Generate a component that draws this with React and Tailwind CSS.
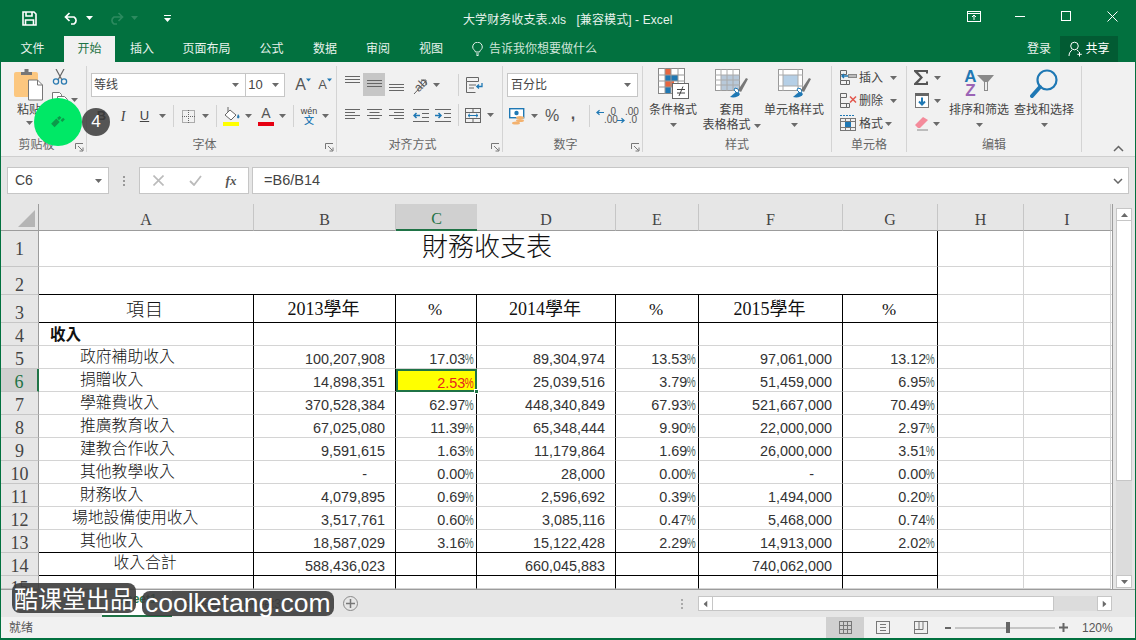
import { Fragment } from 'react';

const rows = [
  [5, '政府補助收入', '100,207,908', '17.03', '89,304,974', '13.53', '97,061,000', '13.12'],
  [6, '捐贈收入', '14,898,351', '2.53', '25,039,516', '3.79', '51,459,000', '6.95'],
  [7, '學雜費收入', '370,528,384', '62.97', '448,340,849', '67.93', '521,667,000', '70.49'],
  [8, '推廣教育收入', '67,025,080', '11.39', '65,348,444', '9.90', '22,000,000', '2.97'],
  [9, '建教合作收入', '9,591,615', '1.63', '11,179,864', '1.69', '26,000,000', '3.51'],
  [10, '其他教學收入', '-', '0.00', '28,000', '0.00', '-', '0.00'],
  [11, '財務收入', '4,079,895', '0.69', '2,596,692', '0.39', '1,494,000', '0.20'],
  [12, '場地設備使用收入', '3,517,761', '0.60', '3,085,116', '0.47', '5,468,000', '0.74'],
  [13, '其他收入', '18,587,029', '3.16', '15,122,428', '2.29', '14,913,000', '2.02'],
];

const CJK_TC = "font-['Noto_Sans_CJK_TC',sans-serif] font-light";
const SERIF = "font-['Liberation_Serif','Noto_Sans_CJK_TC',serif]";

const Caret = ({ className = '', color = '#6a6a6a' }) => (
  <svg width="7" height="4" viewBox="0 0 7 4" className={className}>
    <path d="M0 0h7L3.5 4z" fill={color} />
  </svg>
);

const Slot = ({ className = '', children }) => (
  <div className={`flex h-full shrink-0 items-center justify-center ${className}`}>{children}</div>
);

const Divider = () => <div className="h-[22px] w-px bg-[#d2d2d2]" />;

const Launcher = () => (
  <svg width="9" height="9" viewBox="0 0 9 9" fill="none" stroke="#777">
    <path d="M.5 6V.5H8" />
    <path d="M3 3l4.5 4.5M8 4.5V8H4.5" />
  </svg>
);

// one ribbon group, with its caption and the little launcher in the corner
const Group = ({ className = '', label, launcher, children }) => (
  <div className={`mt-1 flex h-[86px] shrink-0 flex-col border-r border-[#d4d4d4] ${className}`}>
    <div className="h-[71px]">{children}</div>
    <div className={`grid h-[15px] items-center text-[12px] leading-none text-[#666] ${launcher ? 'grid-cols-[1fr_14px]' : 'grid-cols-1'}`}>
      <span className="text-center">{label}</span>
      {launcher && (
        <span className="mt-[6px] flex justify-end pr-[2px]">
          <Launcher />
        </span>
      )}
    </div>
  </div>
);

const Lines = ({ widths, gap = 3, width = 16, align = 'left', className = '' }) => (
  <svg width={width} height={widths.length * (gap + 1)} className={className}>
    {widths.map((w, i) => (
      <rect
        key={i}
        x={align === 'left' ? 0 : align === 'right' ? width - w : (width - w) / 2}
        y={i * (gap + 1)}
        width={w}
        height="1"
        fill="#666"
      />
    ))}
  </svg>
);

const PasteIcon = () => (
  <svg width="30" height="32" viewBox="0 0 30 32">
    <rect x="0" y="3" width="24" height="25" rx="2" fill="#fcc77f" />
    <path d="M7 5V3h3.5V0h4v3H18v3H7z" fill="#777" />
    <path d="M14.5 11h9l5 5v15h-14z" fill="#fff" stroke="#777" />
    <path d="M23.5 11v5h5" fill="none" stroke="#777" />
  </svg>
);

const ScissorsIcon = () => (
  <svg width="16" height="16" viewBox="0 0 16 16" fill="none">
    <path d="M4 0l6 11M12 0L6 11" stroke="#666" strokeWidth="1.2" />
    <circle cx="4" cy="12.5" r="2.6" stroke="#2a7ab0" strokeWidth="1.3" />
    <circle cx="12" cy="12.5" r="2.6" stroke="#2a7ab0" strokeWidth="1.3" />
  </svg>
);

const CopyIcon = () => (
  <svg width="16" height="15" viewBox="0 0 16 15" fill="#fff" stroke="#777">
    <path d="M.5.5h7l2 2v8h-9z" />
    <path d="M5.5 4.5h7l3 3v7h-10z" />
    <path d="M7.5 8.5h6M7.5 10.5h6M7.5 12.5h6" />
  </svg>
);

const BorderIcon = () => (
  <svg width="13" height="13" viewBox="0 0 13 13" fill="none" stroke="#666" strokeDasharray="1 1">
    <rect x=".5" y=".5" width="12" height="12" />
    <path d="M6.5 0v13M0 6.5h13" />
  </svg>
);

const FillIcon = () => (
  <svg width="18" height="19" viewBox="0 0 18 19">
    <path d="M7 3l6 5-5 5-6-5z" fill="#fff" stroke="#666" />
    <path d="M5 0v5" stroke="#666" />
    <path d="M15 7c1.5 2 2 3 1 4s-2 0-2-1z" fill="#2a7ab0" />
    <rect x="0" y="15" width="16" height="4" fill="#ffff00" />
  </svg>
);

const OrientationIcon = () => (
  <div className="flex h-[22px] w-[22px] items-center justify-center">
    <span className="-rotate-45 text-[12px] leading-none text-[#555]">ab</span>
    <svg width="20" height="20" viewBox="0 0 20 20" className="-ml-[19px]" fill="none" stroke="#666">
      <path d="M6 19L18 6M13 5h5v5" />
    </svg>
  </div>
);

const WrapIcon = () => (
  <svg width="17" height="16" viewBox="0 0 17 16" fill="none" stroke="#666">
    <path d="M.5.5h12v4H.5zM.5 4.5v11h9M3 8h7M3 11h5" />
    <path d="M16 6v3.5h-5M13 7.5l-2.2 2 2.2 2" stroke="#1f78b4" strokeWidth="1.3" />
  </svg>
);

const MergeIcon = () => (
  <svg width="16" height="15" viewBox="0 0 16 15" fill="none" stroke="#666">
    <rect x=".5" y=".5" width="15" height="14" />
    <path d="M.5 4.5h15M.5 10.5h15M8 .5v4M8 10.5v4" />
    <path d="M3 7.5h10M5 5.8L3 7.5l2 1.7M11 5.8l2 1.7-2 1.7" stroke="#1f78b4" />
  </svg>
);

const IndentIcon = ({ dir }) => (
  <svg width="16" height="13" viewBox="0 0 16 13" fill="none" stroke="#666">
    <path d="M0 .5h16M9 4.5h7M9 8.5h7M0 12.5h16" />
    <path
      d={dir === 'dec' ? 'M7 6.5H1M3.5 4L1 6.5 3.5 9' : 'M0 6.5h6M3.5 4L6 6.5 3.5 9'}
      stroke="#1f78b4"
      strokeWidth="1.5"
    />
  </svg>
);

const CurrencyIcon = () => (
  <svg width="16" height="17" viewBox="0 0 16 17">
    <rect x=".7" y=".7" width="14" height="9" fill="#fff" stroke="#1f78b4" strokeWidth="1.4" />
    <circle cx="7.5" cy="5" r="2.2" fill="#1f78b4" />
    <ellipse cx="11" cy="9.5" rx="4" ry="1.6" fill="#f3b26f" />
    <ellipse cx="11" cy="12.5" rx="4" ry="1.6" fill="#f3b26f" />
    <ellipse cx="7" cy="15" rx="4" ry="1.6" fill="#f3b26f" />
  </svg>
);

const DecimalIcon = ({ more }) => (
  <div className="grid h-[16px] w-[20px] grid-cols-[8px_12px] grid-rows-2 items-center text-[10px] leading-[8px] text-[#555]">
    {more ? (
      <>
        <span />
        <span className="whitespace-nowrap text-right">.00</span>
        <svg width="8" height="7" viewBox="0 0 9 7" fill="none" stroke="#1f78b4" strokeWidth="1.4">
          <path d="M0 3.5h8M5 1l3 2.5L5 6" />
        </svg>
        <span className="text-right">.0</span>
      </>
    ) : (
      <>
        <svg width="8" height="7" viewBox="0 0 9 7" fill="none" stroke="#1f78b4" strokeWidth="1.4">
          <path d="M9 3.5H1M4 1L1 3.5 4 6" />
        </svg>
        <span className="text-right">.0</span>
        <span />
        <span className="whitespace-nowrap text-right">.00</span>
      </>
    )}
  </div>
);

const CondFormatIcon = () => (
  <svg width="31" height="31" viewBox="0 0 31 31">
    <rect x=".5" y=".5" width="26" height="25" fill="#fff" stroke="#888" />
    <rect x="7" y="1" width="6" height="6" fill="#e8663f" />
    <rect x="7" y="7" width="13" height="6" fill="#1f78b4" />
    <rect x="7" y="13" width="9" height="6" fill="#e8663f" />
    <rect x="7" y="19" width="6" height="6" fill="#1f78b4" />
    <path d="M7 0v26M13 0v26M20 0v26M0 7h27M0 13h27M0 19h27" stroke="#999" fill="none" />
    <rect x="14.5" y="15.5" width="16" height="15" fill="#fff" stroke="#666" />
    <path d="M19 21.5h8M19 25h8M25 18.5l-4 9.5" stroke="#444" fill="none" />
  </svg>
);

const Brush = () => (
  <>
    <path d="M15 28l7-6 3 3c-1 3-6 4-10 3z" fill="#1f78b4" />
    <path d="M20 19a4 4 0 014 4l-2 1-3-3z" fill="#fff" stroke="#1f78b4" />
    <path d="M23 21L31 9l2 1-7 13z" fill="#777" />
  </>
);

const TableStyleIcon = () => (
  <svg width="33" height="29" viewBox="0 0 33 29">
    <rect x=".5" y=".5" width="24" height="21" fill="#fff" stroke="#999" />
    <rect x="6" y="6" width="18" height="15" fill="#b8c9da" />
    <path d="M6 0v22M12 0v22M18 0v22M0 6h25M0 11h25M0 16h25" stroke="#aaa" fill="none" />
    <Brush />
  </svg>
);

const CellStyleIcon = () => (
  <svg width="33" height="29" viewBox="0 0 33 29">
    <rect x=".5" y=".5" width="24" height="21" fill="#fff" stroke="#999" />
    <rect x="5" y="6" width="15" height="11" fill="#b5cfe6" />
    <path d="M5 0v22M20 0v22M0 6h25M0 17h25" stroke="#aaa" fill="none" />
    <Brush />
  </svg>
);

const InsertCellsIcon = () => (
  <svg width="17" height="15" viewBox="0 0 17 15" fill="none" stroke="#666">
    <path d="M.5.5h6v4h-6zM.5 10.5h6v4h-6zM6.5 10.5h3v4h-3zM.5 4.5v6" />
    <rect x="8.5" y="4.5" width="8" height="3" fill="#bbb" stroke="#888" />
    <path d="M8 6H2M4 4L2 6l2 2" stroke="#1f78b4" strokeWidth="1.4" />
  </svg>
);

const DeleteCellsIcon = () => (
  <svg width="17" height="15" viewBox="0 0 17 15" fill="none" stroke="#666">
    <path d="M.5.5h6v4h-6zM.5 10.5h6v4h-6zM6.5 10.5h3v4h-3zM.5 4.5v6h7" />
    <path d="M10 3.5l6 6M16 3.5l-6 6" stroke="#e2574c" strokeWidth="1.5" />
  </svg>
);

const FormatCellsIcon = () => (
  <svg width="17" height="17" viewBox="0 0 17 17" fill="none" stroke="#777">
    <path d="M0 .5h2M3 .5h2M6 .5h2M9 .5h2M12 .5h2" stroke="#1f78b4" />
    <rect x=".5" y="3.5" width="15" height="12" />
    <path d="M.5 6.5h15M.5 12.5h15M5.5 3.5v12M10.5 3.5v12" />
    <rect x="5" y="7" width="6" height="5" fill="#1f78b4" stroke="none" />
  </svg>
);

const SigmaIcon = () => (
  <svg width="15" height="15" viewBox="0 0 15 15">
    <path d="M0 0h14v3.5h-2V2H4l5 5.5L4 13h8v-1.5h2V15H0v-1.5L6 7.5 0 1.5z" fill="#555" />
  </svg>
);

const FillDownIcon = () => (
  <svg width="14" height="15" viewBox="0 0 14 15">
    <rect x=".5" y=".5" width="13" height="14" fill="#fff" stroke="#777" />
    <rect x="0" y="0" width="14" height="3" fill="#666" />
    <path d="M7 4.5v7M4 8.5l3 3 3-3" fill="none" stroke="#1f78b4" strokeWidth="2" />
  </svg>
);

const EraserIcon = () => (
  <svg width="16" height="15" viewBox="0 0 16 15">
    <path d="M1 9l8-8 5 3-8 8H4z" fill="#f48b9b" />
    <path d="M3 14h11" stroke="#888" />
  </svg>
);

const SortIcon = () => (
  <div className="flex h-[29px] w-[30px] items-center">
    <div className="flex w-[13px] flex-col items-center text-[17px] font-bold leading-[14px]">
      <span className="text-[#1f78b4]">A</span>
      <span className="text-[#9b64b5]">Z</span>
    </div>
    <svg width="17" height="16" viewBox="0 0 17 16" className="-mt-[2px]">
      <path d="M0 0h17l-6 7v9H7V7z" fill="#8a8a8a" />
      <path d="M8 7v8h2V7" fill="#eee" />
    </svg>
  </div>
);

const FindIcon = () => (
  <svg width="28" height="29" viewBox="0 0 28 29" fill="none" stroke="#1f78b4">
    <circle cx="17" cy="11" r="9.5" strokeWidth="2.2" />
    <path d="M10 18L2 27" strokeWidth="4" strokeLinecap="round" />
  </svg>
);

const RibbonLabel = ({ children, className = '' }) => (
  <div className={`text-center text-[12px] leading-[15px] text-[#444] ${className}`}>{children}</div>
);

const BigButton = ({ className = '', icon, children }) => (
  <div className={`flex shrink-0 flex-col items-center ${className}`}>
    <div className="flex h-[33px] items-center justify-center">{icon}</div>
    {children}
  </div>
);

const TitleBar = () => (
  <div className="flex h-[36px] items-center text-white">
    <div className="flex h-full w-[462px] items-center">
      <Slot className="ml-[20px] w-[17px]">
        <svg width="15" height="15" viewBox="0 0 15 15" fill="none" stroke="#fff" strokeWidth="1.6">
          <path d="M1 1h11l2 2v11H1z" />
          <path d="M4 1v4h6V1M3.5 14V9h8v5" />
        </svg>
      </Slot>
      <Slot className="ml-[25px] w-[16px]">
        <svg width="15" height="13" viewBox="0 0 15 13" fill="none" stroke="#fff" strokeWidth="1.7">
          <path d="M2 5h8a4 4 0 010 7H7M5.5 1L1.5 5l4 4" />
        </svg>
      </Slot>
      <Slot className="ml-[5px] w-[10px]">
        <Caret color="#fff" />
      </Slot>
      <Slot className="ml-[14px] w-[16px]">
        <svg width="15" height="13" viewBox="0 0 15 13" fill="none" stroke="#2c8a5f" strokeWidth="1.7">
          <path d="M13 5H5a4 4 0 000 7h3M9.5 1l4 4-4 4" />
        </svg>
      </Slot>
      <Slot className="ml-[5px] w-[10px]">
        <Caret color="#2c8a5f" />
      </Slot>
      <Slot className="ml-[23px] w-[10px]">
        <svg width="7" height="7" viewBox="0 0 7 7" fill="#fff">
          <rect width="7" height="1" />
          <path d="M0 3h7L3.5 7z" />
        </svg>
      </Slot>
    </div>
    <div className="mt-[3px] whitespace-pre text-[12px] tracking-[0.1px] text-[#e8f3ed]">大学财务收支表.xls   [兼容模式] - Excel</div>
    <div className="ml-auto flex h-full items-center pb-[4px]">
      <Slot className="w-[46px]">
        <svg width="14" height="11" viewBox="0 0 14 11" fill="none" stroke="#fff">
          <rect x=".5" y=".5" width="13" height="10" />
          <path d="M.5 2.5h13M7 9V4.5M5 6l2-2 2 2" />
        </svg>
      </Slot>
      <Slot className="w-[46px]">
        <div className="h-px w-[10px] bg-white" />
      </Slot>
      <Slot className="w-[46px]">
        <div className="h-[10px] w-[10px] border border-white" />
      </Slot>
      <Slot className="w-[46px]">
        <svg width="11" height="11" viewBox="0 0 11 11" stroke="#fff">
          <path d="M.5.5l10 10M10.5.5l-10 10" />
        </svg>
      </Slot>
    </div>
  </div>
);

const Tab = ({ className = '', active, children }) => (
  <div
    className={`flex h-full shrink-0 items-center justify-center text-[12px] ${className} ${
      active ? 'bg-[#f1f1f1] text-[#1f7346]' : 'text-[#e8f3ed]'
    }`}
  >
    {children}
  </div>
);

const TabBar = () => (
  <div className="flex h-[26px] text-white">
    <Tab className="w-[63px]">文件</Tab>
    <Tab className="w-[51px]" active>开始</Tab>
    <Tab className="w-[54px]">插入</Tab>
    <Tab className="w-[75px]">页面布局</Tab>
    <Tab className="w-[55px]">公式</Tab>
    <Tab className="w-[52px]">数据</Tab>
    <Tab className="w-[54px]">审阅</Tab>
    <Tab className="w-[52px]">视图</Tab>
    <div className="ml-[15px] flex items-center gap-[6px] text-[12px] text-[#cfe5d9]">
      <svg width="11" height="14" viewBox="0 0 11 14" fill="none" stroke="#e8f3ed">
        <path d="M3.5 10C3 8 .7 7.5.7 5a4.8 4.8 0 019.6 0c0 2.5-2.3 3-2.8 5zM4 12h3M4.5 13.5h2" />
      </svg>
      告诉我你想要做什么
    </div>
    <div className="ml-auto flex h-full items-center">
      <span className="mr-[9px] text-[12px] text-[#e8f3ed]">登录</span>
      <div className="mr-[17px] flex h-full w-[58px] items-center justify-center gap-[2px] bg-[#025b33] text-[12px]">
        <svg width="15" height="16" viewBox="0 0 15 16" fill="none" stroke="#fff">
          <circle cx="6.5" cy="5" r="3.8" />
          <path d="M1 15c0-3 1.5-5 3-5.8M9 9.3c.7.3 1.3.7 1.7 1.2M11.5 11v4.5M9.3 13.3h4.5" />
        </svg>
        共享
      </div>
    </div>
  </div>
);

const FontGroup = () => (
  <Group className="w-[250px]" label="字体" launcher>
    <div className="ml-[4px] mt-[7px] flex h-[24px]">
      <div className="flex w-[157px] items-center justify-between border border-[#c6c6c6] bg-white pl-[2px] pr-[6px] text-[12px] text-[#444]">
        等线
        <Caret />
      </div>
      <div className="-ml-px flex w-[40px] items-center justify-between border border-[#c6c6c6] bg-white pl-[2px] pr-[5px] text-[13px] text-[#444]">
        10
        <Caret />
      </div>
      <Slot className="ml-[7px] w-[22px]">
        <span className="text-[16px] text-[#555]">A</span>
        <Caret className="-mt-[11px] w-[5px]" color="#1f78b4" />
      </Slot>
      <Slot className="w-[22px]">
        <span className="text-[13px] text-[#555]">A</span>
        <Caret className="-mt-[11px] w-[5px]" color="#1f78b4" />
      </Slot>
    </div>
    <div className="ml-[4px] mt-[8px] flex h-[22px] text-[#444]">
      <Slot className="w-[21px] text-[13px] font-bold">B</Slot>
      <Slot className="w-[22px] font-['Liberation_Serif',serif] text-[14px] italic">I</Slot>
      <Slot className="w-[21px] text-[13px] underline">U</Slot>
      <Slot className="w-[14px]"><Caret /></Slot>
      <Slot className="w-[8px]"><Divider /></Slot>
      <Slot className="w-[22px]"><BorderIcon /></Slot>
      <Slot className="w-[12px]"><Caret /></Slot>
      <Slot className="w-[10px]"><Divider /></Slot>
      <Slot className="w-[22px]"><FillIcon /></Slot>
      <Slot className="w-[10px]"><Caret /></Slot>
      <Slot className="ml-[2px] w-[22px]">
        <div className="flex w-[16px] flex-col items-center">
          <span className="text-[14px] leading-[13px] text-[#555]">A</span>
          <div className="mt-[2px] h-[4px] w-[16px] bg-[#e60012]" />
        </div>
      </Slot>
      <Slot className="w-[10px]"><Caret /></Slot>
      <Slot className="w-[12px]"><Divider /></Slot>
      <Slot className="w-[20px]">
        <div className="flex flex-col items-center leading-none">
          <span className="text-[9px] text-[#444]">wén</span>
          <span className="text-[10px] font-medium text-[#1f78b4]">文</span>
        </div>
      </Slot>
      <Slot className="w-[12px]"><Caret /></Slot>
    </div>
  </Group>
);

const AlignGroup = () => (
  <Group className="w-[166px]" label="对齐方式" launcher>
    <div className="ml-[4px] mt-[7px] flex h-[23px]">
      <Slot className="w-[22px] pb-[8px]"><Lines widths={[15, 15, 15]} gap={2} width={15} /></Slot>
      <Slot className="w-[22px] bg-[#c6c6c6]"><Lines widths={[15, 15, 15]} gap={2} width={15} /></Slot>
      <Slot className="w-[22px] pt-[8px]"><Lines widths={[15, 15, 15]} gap={2} width={15} /></Slot>
      <Slot className="ml-[3px] w-[22px]"><OrientationIcon /></Slot>
      <Slot className="w-[8px]"><Caret /></Slot>
      <Slot className="ml-[13px] w-[10px]"><Divider /></Slot>
      <Slot className="w-[22px]"><WrapIcon /></Slot>
    </div>
    <div className="ml-[4px] mt-[8px] flex h-[22px]">
      <Slot className="w-[22px]"><Lines widths={[15, 10, 15, 10]} gap={2} width={15} /></Slot>
      <Slot className="w-[22px]"><Lines widths={[15, 10, 15, 10]} gap={2} width={15} align="center" /></Slot>
      <Slot className="w-[22px]"><Lines widths={[15, 10, 15, 10]} gap={2} width={15} align="right" /></Slot>
      <Slot className="ml-[3px] w-[22px]"><IndentIcon dir="dec" /></Slot>
      <Slot className="w-[22px]"><IndentIcon dir="inc" /></Slot>
      <Slot className="w-[8px]"><Divider /></Slot>
      <Slot className="w-[22px]"><MergeIcon /></Slot>
      <Slot className="w-[12px]"><Caret /></Slot>
    </div>
  </Group>
);

const NumberGroup = () => (
  <Group className="w-[140px]" label="数字" launcher>
    <div className="ml-[4px] mt-[7px] flex h-[24px] w-[131px] items-center justify-between border border-[#c6c6c6] bg-white pl-[3px] pr-[6px] text-[12px] text-[#444]">
      百分比
      <Caret />
    </div>
    <div className="ml-[4px] mt-[8px] flex h-[22px]">
      <Slot className="w-[20px]"><CurrencyIcon /></Slot>
      <Slot className="w-[14px]"><Caret /></Slot>
      <Slot className="w-[22px] text-[16px] text-[#555]">%</Slot>
      <Slot className="w-[20px] pb-[5px] text-[16px] font-bold text-[#555]">,</Slot>
      <Slot className="w-[12px]"><Divider /></Slot>
      <Slot className="w-[22px]"><DecimalIcon /></Slot>
      <Slot className="w-[20px]"><DecimalIcon more /></Slot>
    </div>
  </Group>
);

const StylesGroup = () => (
  <Group className="w-[189px]" label="样式">
    <div className="flex pt-[1px]">
      <BigButton className="w-[60px]" icon={<CondFormatIcon />}>
        <RibbonLabel className="mt-[3px]">条件格式</RibbonLabel>
        <Caret className="mt-[5px]" />
      </BigButton>
      <BigButton className="w-[57px]" icon={<TableStyleIcon />}>
        <RibbonLabel className="mt-[3px]">套用</RibbonLabel>
        <RibbonLabel className="flex items-center gap-[3px] whitespace-nowrap">
          表格格式 <Caret />
        </RibbonLabel>
      </BigButton>
      <BigButton className="w-[68px]" icon={<CellStyleIcon />}>
        <RibbonLabel className="mt-[3px] whitespace-nowrap">单元格样式</RibbonLabel>
        <Caret className="mt-[5px]" />
      </BigButton>
    </div>
  </Group>
);

const CellRow = ({ icon, label, caretClass = 'ml-[7px]' }) => (
  <div className="flex h-[23px] items-center">
    <Slot className="w-[20px]">{icon}</Slot>
    <span className="ml-[1px] text-[12px] text-[#444]">{label}</span>
    <Caret className={caretClass} />
  </div>
);

const CellsGroup = () => (
  <Group className="w-[75px]" label="单元格">
    <div className="ml-[6px] flex flex-col">
      <CellRow icon={<InsertCellsIcon />} label="插入" />
      <CellRow icon={<DeleteCellsIcon />} label="删除" />
      <CellRow icon={<FormatCellsIcon />} label="格式" caretClass="ml-[2px]" />
    </div>
  </Group>
);

const EditGroup = () => (
  <Group className="w-[175px]" label="编辑">
    <div className="flex">
      <div className="ml-[6px] flex w-[32px] shrink-0 flex-col">
        <div className="flex h-[23px] items-center gap-[5px] pl-[1px]">
          <SigmaIcon />
          <Caret />
        </div>
        <div className="flex h-[23px] items-center gap-[5px] pl-[2px]">
          <FillDownIcon />
          <Caret />
        </div>
        <div className="flex h-[23px] items-center gap-[3px] pl-[1px]">
          <EraserIcon />
          <Caret />
        </div>
      </div>
      <BigButton className="ml-[1px] w-[66px] pt-[1px]" icon={<SortIcon />}>
        <RibbonLabel className="mt-[3px] whitespace-nowrap">排序和筛选</RibbonLabel>
        <Caret className="mt-[5px]" />
      </BigButton>
      <BigButton className="w-[64px] pt-[1px]" icon={<FindIcon />}>
        <RibbonLabel className="mt-[3px] whitespace-nowrap">查找和选择</RibbonLabel>
        <Caret className="mt-[5px]" />
      </BigButton>
    </div>
  </Group>
);

const Ribbon = () => (
  <div className="flex h-[95px] border-b border-[#cfcfcf] bg-[#f1f1f1]">
    <Group className="w-[86px]" label="剪贴板" launcher>
      <div className="flex pt-[3px]">
        <div className="ml-[13px] flex w-[30px] shrink-0 flex-col items-center">
          <PasteIcon />
          <RibbonLabel className="mt-[2px] whitespace-nowrap text-[12.5px]">粘贴</RibbonLabel>
          <Caret className="mt-[3px]" />
        </div>
        <div className="ml-[7px] flex flex-col">
          <div className="flex h-[16px] w-[18px] items-center justify-center"><ScissorsIcon /></div>
          <div className="mt-[7px] flex h-[15px] items-center">
            <div className="flex w-[18px] justify-center"><CopyIcon /></div>
            <Caret className="ml-[2px]" />
          </div>
        </div>
      </div>
    </Group>
    <FontGroup />
    <AlignGroup />
    <NumberGroup />
    <StylesGroup />
    <CellsGroup />
    <EditGroup />
    <div className="flex flex-1 items-end justify-end pb-[4px] pr-[11px]">
      <svg width="11" height="7" viewBox="0 0 11 7" fill="none" stroke="#666" strokeWidth="1.5">
        <path d="M1 6l4.5-4.5L10 6" />
      </svg>
    </div>
  </div>
);

const FormulaBar = () => (
  <div className="flex h-[47px] items-start bg-[#e6e6e6] pl-[6px] pr-[6px] pt-[10px]">
    <div className="flex h-[27px] w-[102px] items-center justify-between border border-[#c6c6c6] bg-white pl-[7px] pr-[6px] text-[14px] text-[#444]">
      C6
      <Caret />
    </div>
    <div className="flex h-[27px] w-[30px] flex-col items-center justify-center gap-[2px]">
      <div className="h-[2px] w-[2px] bg-[#999]" />
      <div className="h-[2px] w-[2px] bg-[#999]" />
      <div className="h-[2px] w-[2px] bg-[#999]" />
    </div>
    <div className="flex h-[27px] w-[110px] items-center border border-[#c6c6c6] bg-white text-[#bbb]">
      <Slot className="w-[37px]">
        <svg width="11" height="11" viewBox="0 0 11 11" stroke="#bbb" strokeWidth="1.6">
          <path d="M.5.5l10 10M10.5.5l-10 10" />
        </svg>
      </Slot>
      <Slot className="w-[36px]">
        <svg width="13" height="11" viewBox="0 0 13 11" fill="none" stroke="#bbb" strokeWidth="1.8">
          <path d="M1 6l4 4 7-9" />
        </svg>
      </Slot>
      <Slot className="w-[36px] font-['Liberation_Serif',serif] text-[13px] font-bold italic text-[#555]">fx</Slot>
    </div>
    <div className="ml-[3px] flex h-[27px] flex-1 items-center justify-between border border-[#c6c6c6] bg-white pl-[11px] pr-[5px] text-[14.5px] text-[#444]">
      =B6/B14
      <svg width="10" height="6" viewBox="0 0 10 6" fill="none" stroke="#666" strokeWidth="1.5">
        <path d="M1 1l4 4 4-4" />
      </svg>
    </div>
  </div>
);

const ColHead = ({ label, active }) => (
  <div
    className={`flex items-end justify-center border-b ${SERIF} text-[16px] leading-[20px] ${
      active
        ? 'border-b-2 border-b-[#1f7346] bg-[#d0d0d0] text-[#1f7346]'
        : 'border-r border-b-[#9c9c9c] border-r-[#c6c6c6] bg-[#e6e6e6] text-[#444]'
    }`}
  >
    {label}
  </div>
);

const RowHead = ({ n, active }) => (
  <div
    className={`flex justify-center overflow-hidden ${SERIF} text-[18px] leading-[18px] ${
      n === 1 ? 'items-center' : n === 15 ? 'items-start pt-[3px]' : 'items-end'
    } ${
      active
        ? 'border-r-2 border-b border-r-[#1f7346] border-b-[#c6c6c6] bg-[#d0d0d0] text-[#1f7346]'
        : 'border-r border-b border-r-[#9c9c9c] border-b-[#c6c6c6] bg-[#e6e6e6] text-[#444]'
    }`}
  >
    {n}
  </div>
);

const Blank = ({ black, bottom }) => (
  <div className={`border-r border-b ${black ? 'border-r-black' : 'border-r-[#d4d4d4]'} ${bottom ? 'border-b-black' : 'border-b-[#d4d4d4]'}`} />
);

const Num = ({ children, pad = 'pr-[10px]', bottom, className = '' }) => (
  <div
    className={`flex items-end justify-end border-r border-b border-r-black text-[14.4px] leading-[18px] text-[#333] ${pad} ${className} ${
      bottom ? 'border-b-black' : 'border-b-[#d4d4d4]'
    }`}
  >
    {children}
  </div>
);

// the percent sign is squeezed in the sheet's number format
const PctSign = ({ className = '' }) => (
  <span className={`-ml-[4px] inline-block origin-right scale-x-[0.7] ${className}`}>%</span>
);

const Pct = ({ value, bottom }) => (
  <Num pad="pr-[2px]" bottom={bottom}>
    {value}
    <PctSign className="text-[#4d6a66]" />
  </Num>
);

const HeadCell = ({ children }) => (
  <div className={`flex items-center justify-center border-r border-b border-r-black border-b-black pr-[2px] pt-[2px] ${SERIF} text-[18px] text-[#111]`}>
    {children}
  </div>
);

const SheetGrid = () => (
  <div className="grid h-[385px] flex-1 grid-cols-[38px_215px_142px_81px_139px_83px_144px_95px_86px_87px_1fr] grid-rows-[27px_36px_28px_28px_repeat(11,23px)_13px] overflow-hidden border-r border-[#9c9c9c] bg-white">
    <div className="flex items-end justify-end border-r border-b border-r-[#9c9c9c] border-b-[#9c9c9c] bg-[#e6e6e6] p-[3px]">
      <svg width="17" height="17" viewBox="0 0 17 17">
        <path d="M17 0v17H0z" fill="#b5b5b5" />
      </svg>
    </div>
    {['A', 'B', 'C', 'D', 'E', 'F', 'G', 'H', 'I'].map((c) => (
      <ColHead key={c} label={c} active={c === 'C'} />
    ))}
    <div className="border-b border-b-[#9c9c9c] bg-[#e6e6e6]" />

    <RowHead n={1} />
    <div className={`col-span-7 flex items-center justify-center border-r border-b border-r-black border-b-[#d4d4d4] pb-[8px] pr-[2px] ${CJK_TC} text-[26px] leading-none text-[#111]`}>
      財務收支表
    </div>
    <Blank /><Blank /><div className="border-b border-b-[#d4d4d4]" />

    <RowHead n={2} />
    <div className="col-span-7 border-r border-b border-r-black border-b-black" />
    <Blank /><Blank /><div className="border-b border-b-[#d4d4d4]" />

    <RowHead n={3} />
    <HeadCell><span className="-mt-[3px] font-['Noto_Sans_CJK_TC',sans-serif] font-light tracking-[1px]">項目</span></HeadCell>
    <HeadCell>2013學年</HeadCell>
    <HeadCell><span className="text-[17px]">%</span></HeadCell>
    <HeadCell>2014學年</HeadCell>
    <HeadCell><span className="text-[17px]">%</span></HeadCell>
    <HeadCell>2015學年</HeadCell>
    <HeadCell><span className="text-[17px]">%</span></HeadCell>
    <Blank /><Blank /><div className="border-b border-b-[#d4d4d4]" />

    <RowHead n={4} />
    <div className="flex items-center border-r border-b border-r-black border-b-[#d4d4d4] pl-[11px] font-['Noto_Sans_CJK_TC',sans-serif] text-[15.5px] font-bold leading-none text-[#111]">
      收入
    </div>
    <Blank black /><Blank black /><Blank black /><Blank black /><Blank black /><Blank black />
    <Blank /><Blank /><div className="border-b border-b-[#d4d4d4]" />

    {rows.map(([n, name, b, bp, d, dp, f, fp]) => {
      const last = n === 13;
      return (
        <Fragment key={n}>
          <RowHead n={n} active={n === 6} />
          <div
            className={`flex items-center border-r border-b border-r-black ${last ? 'border-b-black' : 'border-b-[#d4d4d4]'} ${
              n === 12 ? 'pl-[33px]' : 'pl-[41px]'
            } pb-[3px] ${CJK_TC} text-[15.8px] leading-none text-[#111]`}
          >
            {name}
          </div>
          <Num pad={b === '-' ? 'pr-[28px]' : 'pr-[10px]'} bottom={last}>{b}</Num>
          {n === 6 ? (
            <div className="relative flex items-end justify-end bg-[#ffff00] pr-[3px] text-[14.4px] leading-[18px] text-[#e8261c] shadow-[inset_0_0_0_2px_#1f7346]">
              {bp}
              <PctSign />
              <div className="absolute -bottom-[2px] -right-[2px] h-[5px] w-[5px] border border-white bg-[#1f7346]" />
            </div>
          ) : (
            <Pct value={bp} bottom={last} />
          )}
          <Num bottom={last}>{d}</Num>
          <Pct value={dp} bottom={last} />
          <Num pad={f === '-' ? 'pr-[28px]' : 'pr-[10px]'} bottom={last}>{f}</Num>
          <Pct value={fp} bottom={last} />
          <Blank /><Blank /><div className="border-b border-b-[#d4d4d4]" />
        </Fragment>
      );
    })}

    <RowHead n={14} />
    <div className={`flex items-center justify-center border-r border-b border-r-black border-b-black pb-[4px] pr-[2px] ${CJK_TC} text-[15.8px] leading-none text-[#111]`}>
      收入合計
    </div>
    <Num bottom>588,436,023</Num>
    <Blank black bottom />
    <Num bottom>660,045,883</Num>
    <Blank black bottom />
    <Num bottom>740,062,000</Num>
    <Blank black bottom />
    <Blank /><Blank /><div className="border-b border-b-[#d4d4d4]" />

    <RowHead n={15} />
    <Blank black /><Blank black /><Blank black /><Blank black /><Blank black /><Blank black /><Blank black />
    <Blank /><Blank /><div />
  </div>
);

const VScroll = () => (
  <div className="flex h-[385px] w-[22px] shrink-0 flex-col bg-[#e6e6e6] pl-[3px] pt-[4px]">
    <div className="flex h-[13px] w-[16px] items-center justify-center border border-[#c6c6c6] bg-white">
      <Caret className="rotate-180" />
    </div>
    <div className="h-[260px] w-[16px] border-x border-b border-[#c6c6c6] bg-white" />
    <div className="w-[16px] flex-1 bg-[#dcdcdc]" />
    <div className="mb-[1px] flex h-[13px] w-[16px] items-center justify-center border border-[#c6c6c6] bg-white">
      <Caret />
    </div>
  </div>
);

const SheetTabs = () => (
  <div className="flex h-[28px] items-center border-t border-[#9c9c9c] bg-[#e6e6e6]">
    <div className="ml-[101px] flex h-full w-[70px] items-start justify-center border-b-2 border-[#1f7346] bg-white pb-[3px] text-[12px] font-bold text-[#1f7346]">
      Sheet1
    </div>
    <div className="flex h-full w-[60px] items-center justify-center text-[12px] text-[#444]">Sheet2</div>
    <div className="flex h-full w-[60px] items-center justify-center text-[12px] text-[#444]">Sheet3</div>
    <div className="ml-[51px] flex h-[15px] w-[15px] items-center justify-center rounded-full border border-[#8a8a8a] text-[#777]">
      <svg width="9" height="9" viewBox="0 0 9 9" stroke="#777" strokeWidth="1.5">
        <path d="M4.5 0v9M0 4.5h9" />
      </svg>
    </div>
    <div className="ml-[323px] flex flex-col gap-[2px]">
      <div className="h-[2px] w-[2px] bg-[#aaa]" />
      <div className="h-[2px] w-[2px] bg-[#aaa]" />
      <div className="h-[2px] w-[2px] bg-[#aaa]" />
    </div>
    <div className="ml-[15px] flex h-[15px] w-[414px] bg-[#dcdcdc]">
      <div className="flex w-[15px] items-center justify-center border border-[#c6c6c6] bg-white">
        <Caret className="rotate-90" />
      </div>
      <div className="w-[341px] border-y border-r border-[#c6c6c6] bg-white" />
      <div className="ml-auto flex w-[15px] items-center justify-center border border-[#c6c6c6] bg-white">
        <Caret className="-rotate-90" />
      </div>
    </div>
  </div>
);

const StatusBar = () => (
  <div className="flex h-[21px] items-center bg-[#f1f1f1] text-[#555]">
    <span className="ml-[8px] text-[12px]">就绪</span>
    <div className="ml-[793px] flex h-full">
      <Slot className="w-[38px] bg-[#d0d0d0]">
        <svg width="13" height="13" viewBox="0 0 13 13" fill="none" stroke="#777">
          <rect x=".5" y=".5" width="12" height="12" />
          <path d="M.5 4.5h12M.5 8.5h12M4.5.5v12M8.5.5v12" />
        </svg>
      </Slot>
      <Slot className="w-[38px]">
        <svg width="14" height="13" viewBox="0 0 14 13" fill="none" stroke="#777">
          <rect x=".5" y=".5" width="13" height="12" />
          <path d="M4 3.5h6M4 6.5h6M4 9.5h6" />
        </svg>
      </Slot>
      <Slot className="w-[38px]">
        <svg width="14" height="13" viewBox="0 0 14 13" fill="none" stroke="#777">
          <rect x=".5" y=".5" width="13" height="12" />
          <path d="M.5 8.5H9M5 .5v8M9 .5v8" />
        </svg>
      </Slot>
    </div>
    <div className="ml-[5px] h-[2px] w-[6px] bg-[#666]" />
    <div className="relative ml-[4px] flex h-[2px] w-[100px] items-center bg-[#c6c6c6]">
      <div className="absolute left-[51px] h-[11px] w-[4px] bg-[#666]" />
    </div>
    <svg width="9" height="9" viewBox="0 0 9 9" stroke="#666" strokeWidth="2" className="ml-[4px]">
      <path d="M4.5 0v9M0 4.5h9" />
    </svg>
    <span className="ml-[14px] text-[12px]">120%</span>
  </div>
);

export default function App() {
  return (
    <div className="relative h-[640px] w-[1136px] overflow-hidden border-x border-b-2 border-[#02713f] bg-white font-['Liberation_Sans','Noto_Sans_CJK_SC',sans-serif]">
      <div className="bg-[#02713f]">
        <TitleBar />
        <TabBar />
      </div>
      <Ribbon />
      <FormulaBar />
      <div className="flex">
        <SheetGrid />
        <VScroll />
      </div>
      <SheetTabs />
      <StatusBar />

      {/* click highlight + step badge over the ribbon */}
      <div className="absolute left-[33px] top-[98px] flex h-[48px] w-[48px] items-center justify-center rounded-full bg-[#00e866]">
        <svg width="14" height="12" viewBox="0 0 16 14" fill="#0c9a4a">
          <path d="M0 9l6-6 4 4-6 6zM7 2l3-2 2 2-3 3zM11 5l3-3 2 2-3 3z" />
        </svg>
      </div>
      <div className="absolute left-[81px] top-[108px] flex h-[28px] w-[28px] items-center justify-center rounded-full bg-[#3a3a3a]/85 text-[17px] text-white">
        4
      </div>

      {/* course watermark */}
      <div className="absolute left-[11px] top-[583px] flex items-end font-['Noto_Sans_CJK_SC',sans-serif] text-white">
        <div className="rounded-lg bg-[#3c3c3c]/90 px-[2px] text-[24px] leading-[30px]">酷课堂出品</div>
        <div className="-mb-[3px] ml-[6px] rounded-lg bg-[#3c3c3c]/90 px-[3px] font-['Liberation_Sans',sans-serif] text-[26.5px] leading-[25px]">
          coolketang.com
        </div>
      </div>
    </div>
  );
}
